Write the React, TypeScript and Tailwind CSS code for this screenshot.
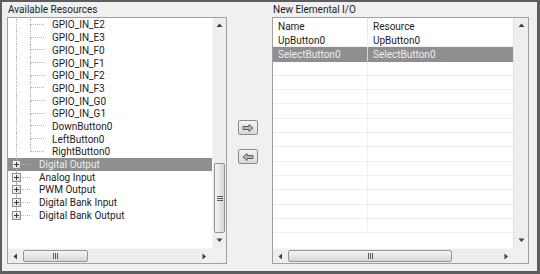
import React from 'react';

const font = { fontFamily: '"Segoe UI", Roboto, "Liberation Sans", sans-serif' };

function PlusBox() {
  return (
    <svg width="9" height="9" viewBox="0 0 9 9" className="shrink-0">
      <defs>
        <linearGradient id="pb" x1="0" y1="0" x2="1" y2="1">
          <stop offset="0" stopColor="#ffffff" />
          <stop offset="1" stopColor="#d6d6d6" />
        </linearGradient>
      </defs>
      <rect x="0.5" y="0.5" width="8" height="8" fill="url(#pb)" stroke="#8e8e8e" />
      <path d="M2 4.5h5M4.5 2v5" stroke="#3a3a3a" strokeWidth="1" />
    </svg>
  );
}

function Tri({ dir }: { dir: 'up' | 'down' | 'left' | 'right' }) {
  const d = {
    up: 'M0.5 4 L3.5 0.5 L6.5 4 Z',
    down: 'M0.5 0.5 L3.5 4 L6.5 0.5 Z',
    left: 'M4 0.5 L0.5 3.5 L4 6.5 Z',
    right: 'M0.5 0.5 L4 3.5 L0.5 6.5 Z',
  }[dir];
  const vertical = dir === 'up' || dir === 'down';
  return (
    <svg width={vertical ? 7 : 5} height={vertical ? 5 : 7} viewBox={vertical ? '0 0 7 5' : '0 0 5 7'}>
      <path d={d} fill="#404040" />
    </svg>
  );
}

function ChildRow({ label, last }: { label: string; last?: boolean }) {
  return (
    <div className="h-[12.7px] flex items-stretch shrink-0">
      <div className="w-[14px] shrink-0">
        <div className="ml-[8px] h-full border-l border-dotted border-[#b4b4b4]" />
      </div>
      <div className="w-[30px] shrink-0 flex">
        <div className="w-[8px] shrink-0" />
        <div className="w-[14px] flex flex-col">
          <div className="h-1/2 border-l border-b border-dotted border-[#b4b4b4]" />
          <div className={`h-1/2 border-dotted border-[#b4b4b4] ${last ? '' : 'border-l'}`} />
        </div>
      </div>
      <span className="flex items-center pt-px leading-none text-[#1c1c1c]">{label}</span>
    </div>
  );
}

function TopRow({ label, selected, last }: { label: string; selected?: boolean; last?: boolean }) {
  return (
    <div className={`h-[12.7px] flex items-stretch shrink-0 ${selected ? 'bg-[#8f8f8f]' : ''}`}>
      <div className="w-[13px] shrink-0 flex flex-col">
        <div className="flex-1 ml-[8px] border-l border-dotted border-[#b4b4b4]" />
        <div className="ml-[4px] h-[9px]">
          <PlusBox />
        </div>
        <div className={`flex-1 ml-[8px] border-dotted border-[#b4b4b4] ${last ? '' : 'border-l'}`} />
      </div>
      <div className="w-[9px] shrink-0 flex items-center">
        <div className="w-full border-t border-dotted border-[#b4b4b4]" />
      </div>
      <div className="w-[9px] shrink-0" />
      <span className={`flex items-center pt-px leading-none ${selected ? 'text-[#ededed]' : 'text-[#1c1c1c]'}`}>
        {label}
      </span>
    </div>
  );
}

function VGrip() {
  return (
    <div className="flex flex-col gap-[1px]">
      <div className="w-[6px] h-px bg-[#5a5a5a]" />
      <div className="w-[6px] h-px bg-[#5a5a5a]" />
      <div className="w-[6px] h-px bg-[#5a5a5a]" />
    </div>
  );
}

function HGrip() {
  return (
    <div className="flex gap-[1px]">
      <div className="w-px h-[6px] bg-[#5a5a5a]" />
      <div className="w-px h-[6px] bg-[#5a5a5a]" />
      <div className="w-px h-[6px] bg-[#5a5a5a]" />
    </div>
  );
}

function ArrowButton({ left }: { left?: boolean }) {
  return (
    <button className="w-[20px] h-[15px] rounded-[2px] border border-[#8a8a8a] bg-gradient-to-b from-[#f4f4f4] to-[#d9d9d9] flex items-center justify-center">
      <svg width="12" height="8" viewBox="0 0 12 8">
        <path
          d={left ? 'M11 2.5 H5 V0.5 L1 4 L5 7.5 V5.5 H11 Z' : 'M1 2.5 H7 V0.5 L11 4 L7 7.5 V5.5 H1 Z'}
          fill="#b8b8b8"
          stroke="#5c5c5c"
          strokeWidth="1"
          strokeLinejoin="round"
        />
      </svg>
    </button>
  );
}

const gpio = ['GPIO_IN_E2', 'GPIO_IN_E3', 'GPIO_IN_F0', 'GPIO_IN_F1', 'GPIO_IN_F2', 'GPIO_IN_F3', 'GPIO_IN_G0', 'GPIO_IN_G1', 'DownButton0', 'LeftButton0'];
const tops = ['Digital Output', 'Analog Input', 'PWM Output', 'Digital Bank Input', 'Digital Bank Output'];
const rows: [string, string][] = [
  ['UpButton0', 'UpButton0'],
  ['SelectButton0', 'SelectButton0'],
  ...Array.from({ length: 12 }, () => ['', ''] as [string, string]),
];

export default function App() {
  return (
    <div className="w-[540px] h-[274px] bg-[#5e5e5e] pt-[2px] pl-[2px] pr-[3px] pb-[3px] text-[10px]" style={font}>
      <div className="w-full h-full bg-[#f0f0f0] flex pl-[5px]">
        {/* Available Resources */}
        <div className="w-[220px] shrink-0 flex flex-col">
          <div className="h-[15px] pl-[1px] flex items-center text-[#1c1c1c]">Available Resources</div>
          <div className="h-[247px] border border-[#a0a0a0] bg-white flex flex-col">
            <div className="h-[230px] flex">
              <div className="flex-1 flex flex-col pt-[0.6px] overflow-hidden">
                {gpio.map((g) => (
                  <ChildRow key={g} label={g} />
                ))}
                <ChildRow label="RightButton0" last />
                {tops.map((t, i) => (
                  <TopRow key={t} label={t} selected={i === 0} last={i === tops.length - 1} />
                ))}
              </div>
              <div className="w-[14px] bg-[#eeeeee] border-l border-[#f7f7f7] flex flex-col">
                <div className="h-[15px] flex items-center justify-center"><Tri dir="up" /></div>
                <div className="flex-1" />
                <div className="h-[70px] mx-[1px] rounded-[2px] border border-[#959595] bg-gradient-to-r from-[#f5f5f5] to-[#d7d7d7] flex items-center justify-center">
                  <VGrip />
                </div>
                <div className="h-[15px] flex items-center justify-center"><Tri dir="down" /></div>
              </div>
            </div>
            <div className="flex-1 flex">
              <div className="flex-1 bg-[#eeeeee] border-t border-[#f7f7f7] flex">
                <div className="w-[15px] flex items-center justify-center"><Tri dir="left" /></div>
                <div className="w-[65px] my-[1px] rounded-[2px] border border-[#959595] bg-gradient-to-b from-[#f5f5f5] to-[#d7d7d7] flex items-center justify-center">
                  <HGrip />
                </div>
                <div className="flex-1" />
                <div className="w-[15px] flex items-center justify-center"><Tri dir="right" /></div>
              </div>
              <div className="w-[14px] bg-[#f0f0f0]" />
            </div>
          </div>
        </div>

        {/* Move buttons */}
        <div className="w-[45px] shrink-0 flex flex-col gap-[14px] pl-[11px] pt-[118px]">
          <ArrowButton />
          <ArrowButton left />
        </div>

        {/* New Elemental I/O */}
        <div className="w-[257px] shrink-0 flex flex-col">
          <div className="h-[15px] pl-[1px] flex items-center text-[#1c1c1c]">New Elemental I/O</div>
          <div className="h-[247px] border border-[#a0a0a0] bg-white flex flex-col">
            <div className="h-[230px] flex">
              <div className="flex-1 flex flex-col overflow-hidden border-r border-[#e2e2e2]">
                <div className="h-[15px] shrink-0 flex text-[#1c1c1c]">
                  <div className="w-[95px] pl-[5px] pt-px flex items-center border-r border-[#e3e3e3]">Name</div>
                  <div className="flex-1 pl-[5px] pt-px flex items-center">Resource</div>
                </div>
                {rows.map(([a, b], i) => {
                  const sel = i === 1;
                  return (
                    <div
                      key={i}
                      className={`h-[14.3px] shrink-0 flex border-b ${sel ? 'bg-[#8f8f8f] text-[#ededed] border-[#8f8f8f]' : 'text-[#1c1c1c] border-[#efefef]'}`}
                    >
                      <div className={`w-[95px] pl-[5px] pt-px flex items-center border-r ${sel ? 'border-[#d8d8d8]' : 'border-[#efefef]'}`}>{a}</div>
                      <div className="flex-1 pl-[5px] pt-px flex items-center">{b}</div>
                    </div>
                  );
                })}
              </div>
              <div className="w-[14px] bg-[#eeeeee] flex flex-col">
                <div className="h-[15px] flex items-center justify-center"><Tri dir="up" /></div>
                <div className="flex-1" />
                <div className="h-[15px] flex items-center justify-center"><Tri dir="down" /></div>
              </div>
            </div>
            <div className="flex-1 flex">
              <div className="flex-1 bg-[#eeeeee] border-t border-[#f7f7f7] flex">
                <div className="w-[15px] flex items-center justify-center"><Tri dir="left" /></div>
                <div className="w-[164px] my-[1px] rounded-[2px] border border-[#959595] bg-gradient-to-b from-[#f5f5f5] to-[#d7d7d7] flex items-center justify-center">
                  <HGrip />
                </div>
                <div className="flex-1" />
                <div className="w-[15px] flex items-center justify-center"><Tri dir="right" /></div>
              </div>
              <div className="w-[14px] bg-[#f0f0f0]" />
            </div>
          </div>
        </div>
      </div>
    </div>
  );
}
